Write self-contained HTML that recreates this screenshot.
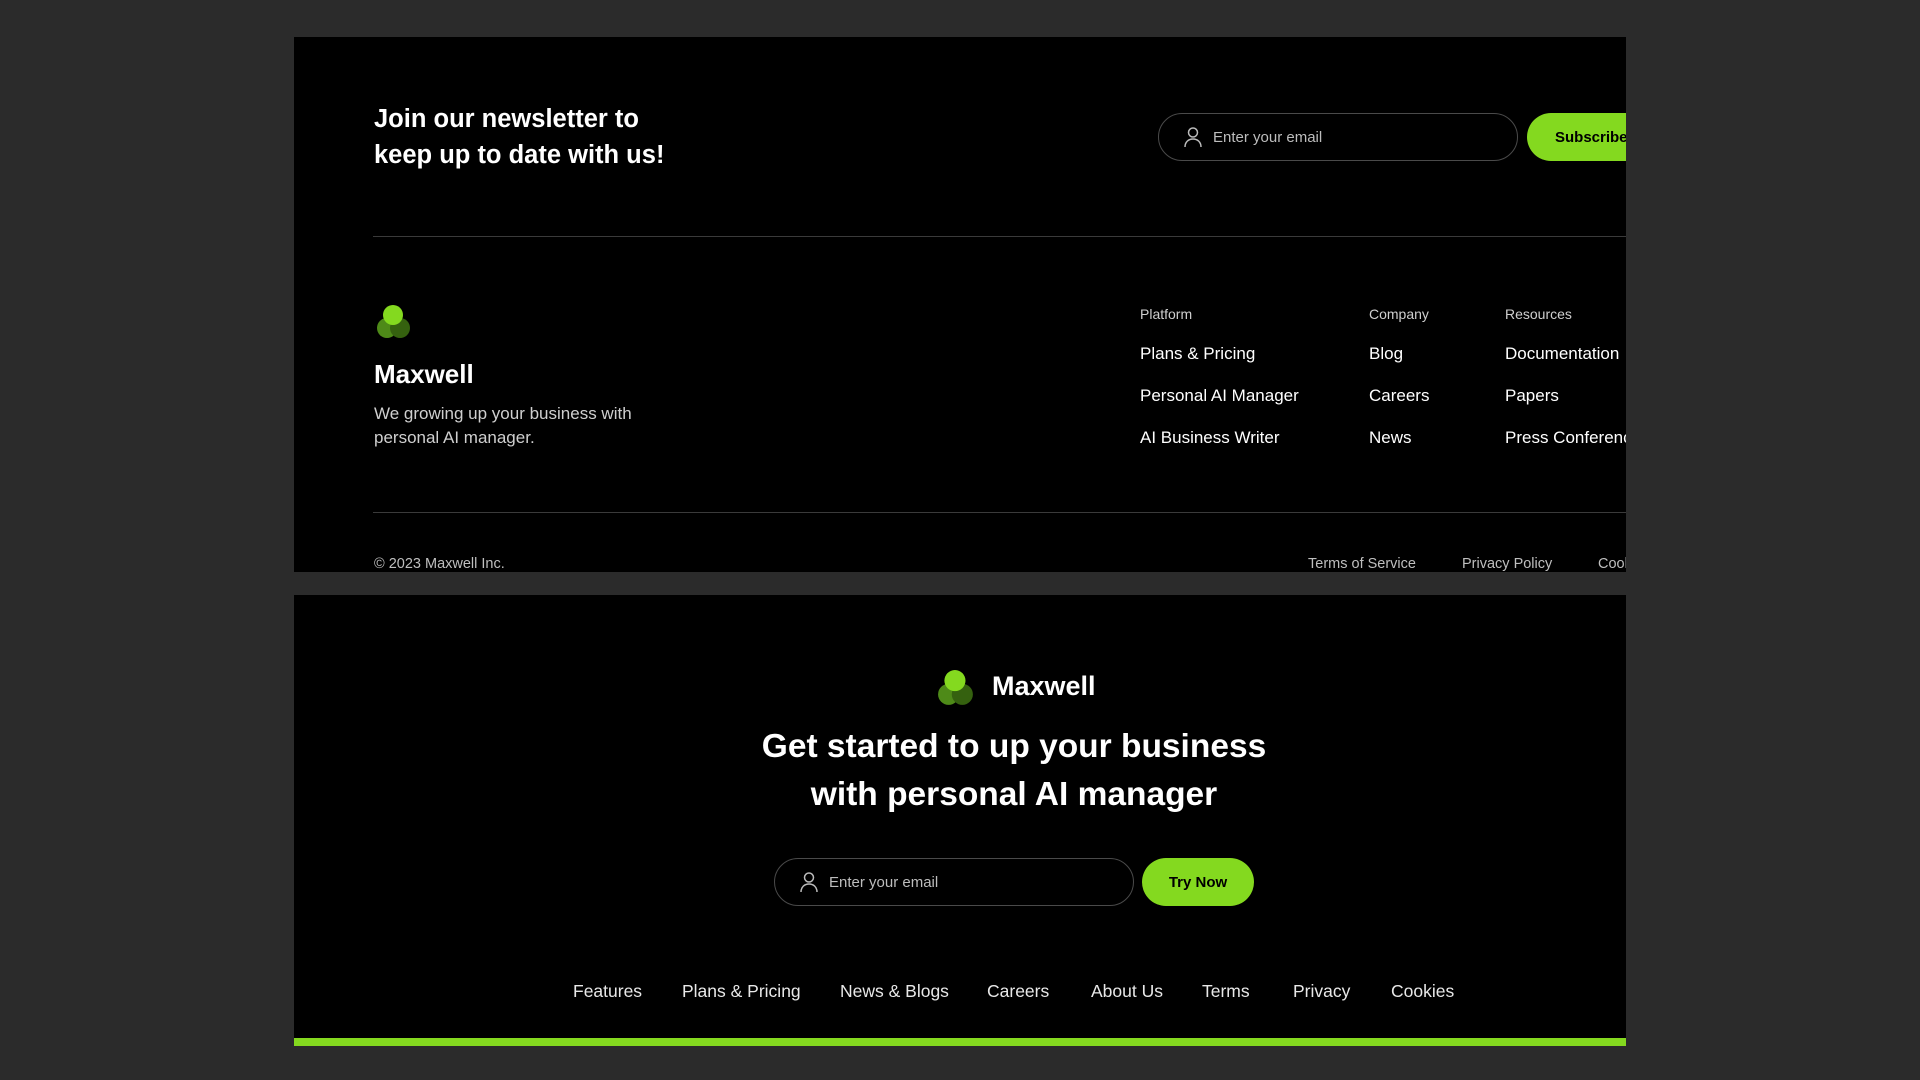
<!DOCTYPE html>
<html><head><meta charset="utf-8"><style>
*{margin:0;padding:0;box-sizing:border-box}
body{width:1920px;height:1080px;background:#2b2b2b;font-family:"Liberation Sans",sans-serif;color:#fff;position:relative;overflow:hidden}
.card{position:absolute;left:294px;width:1332px;background:#000;overflow:hidden}
.a{position:absolute;white-space:nowrap}
.inp{position:absolute;border:1px solid #4a4a4a;border-radius:24px;height:48px}
.inp span{position:absolute;left:54px;top:15px;font-size:15px;color:#bdbdbd}
.inp svg{position:absolute;left:24px;top:12px}
.btn{position:absolute;background:#84d91f;border-radius:24px;height:48px;color:#000;font-weight:bold;font-size:15px;display:flex;align-items:center}
.hr{position:absolute;left:79px;right:0;height:1px;background:#3a3a3a}
.h{font-size:14px;color:#cfcfcf}
.l{font-size:17px;color:#fff}
.s{font-size:14.5px;color:#bfbfbf}
.n{font-size:17.5px;color:#e8e8e8}
</style></head><body>
<div class="card" style="top:37px;height:535px">
  <div class="a" style="left:80px;top:64px;font-size:25.5px;font-weight:bold;line-height:36px">Join our newsletter to<br>keep up to date with us!</div>
  <div class="inp" style="left:864px;top:76px;width:360px"><svg width="20" height="22" viewBox="0 0 20 22" fill="none" stroke="#bbb" stroke-width="1.5"><circle cx="10" cy="6.5" r="4.5"/><path d="M2 21c0-5 3.5-8 8-8s8 3 8 8"/></svg><span>Enter your email</span></div>
  <div class="btn" style="left:1233px;top:76px;width:140px;padding-left:28px">Subscribe</div>
  <div class="hr" style="top:199px"></div>
  <svg class="a" style="left:82px;top:267px" width="36" height="36" viewBox="0 0 36 36"><circle cx="11" cy="24" r="10" fill="#4e8a18"/><circle cx="24" cy="24" r="10" fill="#35610f"/><circle cx="17" cy="11" r="10" fill="#84d91f"/></svg>
  <div class="a" style="left:80px;top:322px;font-size:26px;font-weight:bold">Maxwell</div>
  <div class="a" style="left:80px;top:365px;font-size:17px;color:#cfcfcf;line-height:24px">We growing up your business with<br>personal AI manager.</div>
  <div class="a h" style="left:846px;top:269px">Platform</div>
  <div class="a l" style="left:846px;top:307px">Plans &amp; Pricing</div>
  <div class="a l" style="left:846px;top:349px">Personal AI Manager</div>
  <div class="a l" style="left:846px;top:391px">AI Business Writer</div>
  <div class="a h" style="left:1075px;top:269px">Company</div>
  <div class="a l" style="left:1075px;top:307px">Blog</div>
  <div class="a l" style="left:1075px;top:349px">Careers</div>
  <div class="a l" style="left:1075px;top:391px">News</div>
  <div class="a h" style="left:1211px;top:269px">Resources</div>
  <div class="a l" style="left:1211px;top:307px">Documentation</div>
  <div class="a l" style="left:1211px;top:349px">Papers</div>
  <div class="a l" style="left:1211px;top:391px">Press Conference</div>
  <div class="hr" style="top:475px"></div>
  <div class="a s" style="left:80px;top:519px">© 2023 Maxwell Inc.</div>
  <div class="a s" style="left:1014px;top:519px">Terms of Service</div>
  <div class="a s" style="left:1168px;top:519px">Privacy Policy</div>
  <div class="a s" style="left:1304px;top:519px">Cookies</div>
</div>
<div class="card" style="top:595px;height:443px">
  <svg class="a" style="left:643px;top:74px" width="38" height="38" viewBox="0 0 36 36"><circle cx="11" cy="24" r="10" fill="#4e8a18"/><circle cx="24" cy="24" r="10" fill="#35610f"/><circle cx="17" cy="11" r="10" fill="#84d91f"/></svg>
  <div class="a" style="left:698px;top:76px;font-size:27px;font-weight:bold">Maxwell</div>
  <div class="a" style="left:420px;width:600px;top:128px;font-size:33.5px;font-weight:bold;line-height:48px;text-align:center">Get started to up your business<br>with personal AI manager</div>
  <div class="inp" style="left:480px;top:263px;width:360px"><svg width="20" height="22" viewBox="0 0 20 22" fill="none" stroke="#bbb" stroke-width="1.5"><circle cx="10" cy="6.5" r="4.5"/><path d="M2 21c0-5 3.5-8 8-8s8 3 8 8"/></svg><span>Enter your email</span></div>
  <div class="btn" style="left:848px;top:263px;width:112px;justify-content:center">Try Now</div>
  <div class="a n" style="left:279px;top:386px">Features</div>
  <div class="a n" style="left:388px;top:386px">Plans &amp; Pricing</div>
  <div class="a n" style="left:546px;top:386px">News &amp; Blogs</div>
  <div class="a n" style="left:693px;top:386px">Careers</div>
  <div class="a n" style="left:797px;top:386px">About Us</div>
  <div class="a n" style="left:908px;top:386px">Terms</div>
  <div class="a n" style="left:999px;top:386px">Privacy</div>
  <div class="a n" style="left:1097px;top:386px">Cookies</div>
</div>
<div style="position:absolute;left:294px;width:1332px;top:1038px;height:8px;background:#84d91f"></div>
</body></html>
